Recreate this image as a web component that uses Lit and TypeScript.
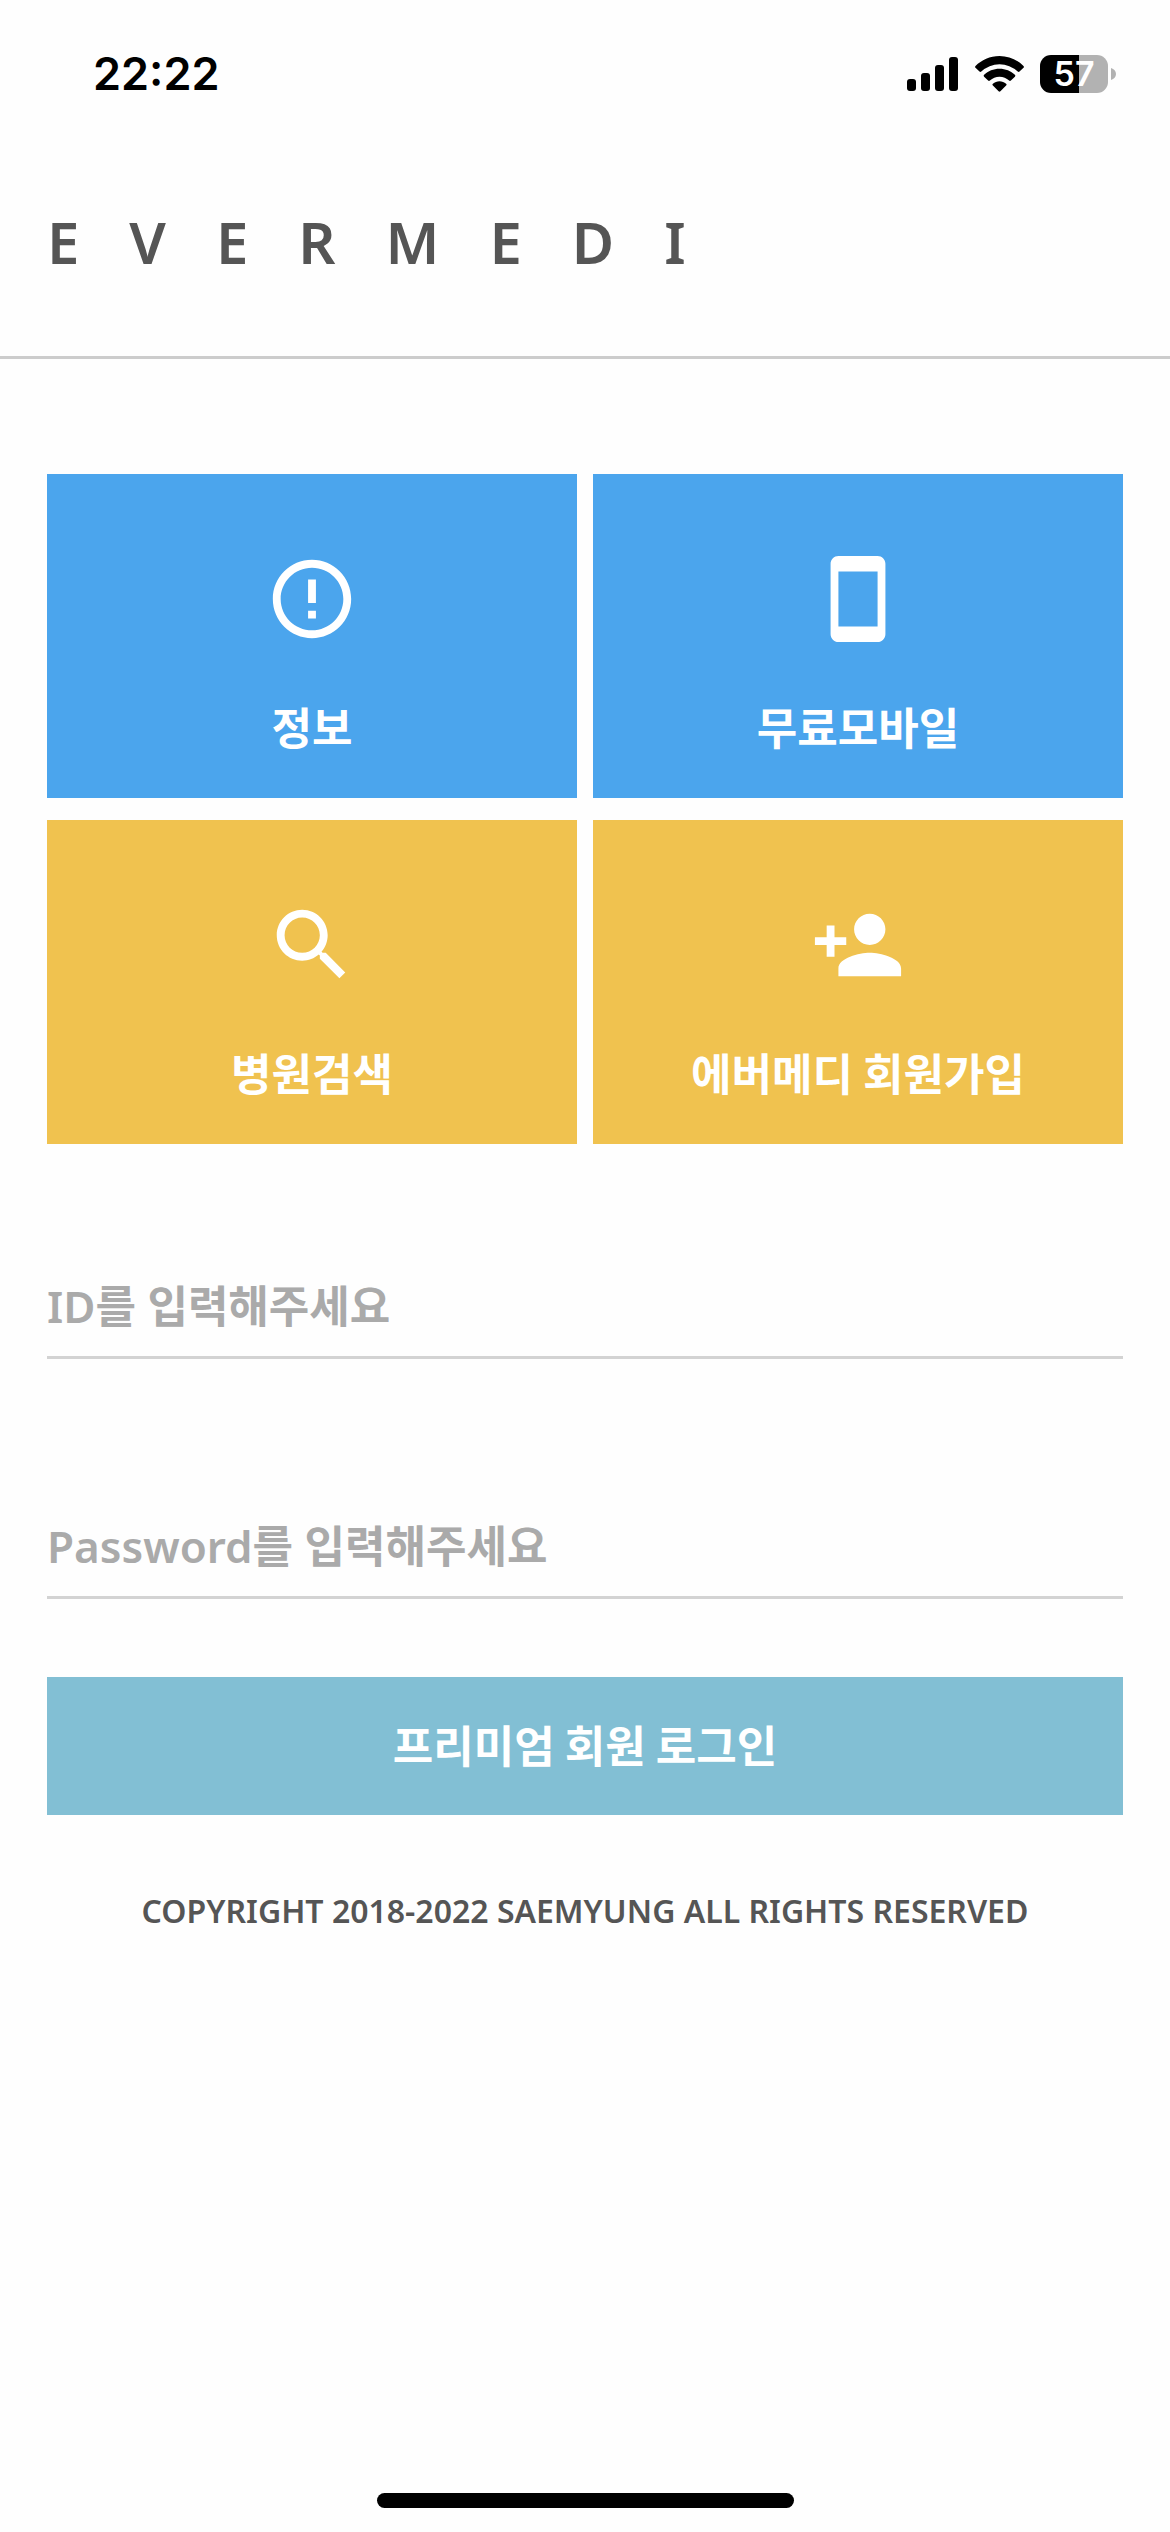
import { LitElement, html, css, svg } from "lit";
import { customElement, property } from "lit/decorators.js";

const icons: Record<string, ReturnType<typeof svg>> = {
  info: svg`<path d="M11 15h2v2h-2zm0-8h2v6h-2zm.99-5C6.47 2 2 6.48 2 12s4.47 10 9.99 10C17.52 22 22 17.52 22 12S17.52 2 11.99 2zM12 20c-4.42 0-8-3.58-8-8s3.58-8 8-8 8 3.58 8 8-3.58 8-8 8z"/>`,
  phone: svg`<path d="M17 1H7c-1.1 0-2 .9-2 2v18c0 1.1.9 2 2 2h10c1.1 0 2-.9 2-2V3c0-1.1-.9-2-2-2zm0 18H7V5h10v14z"/>`,
  search: svg`<path d="M15.5 14h-.79l-.28-.27C15.41 12.59 16 11.11 16 9.5 16 5.91 13.09 3 9.5 3S3 5.91 3 9.5 5.91 16 9.5 16c1.61 0 3.09-.59 4.23-1.57l.27.28v.79l5 4.99L20.49 19l-4.99-5zm-6 0C7.01 14 5 11.99 5 9.5S7.01 5 9.5 5 14 7.01 14 9.5 11.99 14 9.5 14z"/>`,
  join: svg`<path d="M15 12c2.21 0 4-1.79 4-4s-1.79-4-4-4-4 1.79-4 4 1.79 4 4 4zm-9-2V7H4v3H1v2h3v3h2v-3h3v-2H6zm9 4c-2.67 0-8 1.34-8 4v2h16v-2c0-2.66-5.33-4-8-4z"/>`,
};

const tiles = [
  { id: "info", label: "정보", tone: "blue" },
  { id: "phone", label: "무료모바일", tone: "blue" },
  { id: "search", label: "병원검색", tone: "yellow" },
  { id: "join", label: "에버메디 회원가입", tone: "yellow" },
];

@customElement("status-bar")
class StatusBar extends LitElement {
  @property() time = "";
  @property({ type: Number }) level = 0;

  static styles = css`
    :host {
      display: flex;
      justify-content: space-between;
      align-items: center;
      height: 148px;
      padding: 0 54px 0 93px;
      box-sizing: border-box;
      color: #000;
      font-family: Inter, "Liberation Sans", sans-serif;
      font-weight: 600;
    }
    .time {
      font-size: 45px;
      line-height: 56px;
    }
    .right {
      display: flex;
      align-items: center;
    }
    .signal {
      margin-right: 17px;
    }
    .wifi {
      margin-right: 16px;
    }
    .battery {
      width: 68px;
      height: 38px;
      border-radius: 11px;
      color: #fff;
      font-size: 34px;
      line-height: 38px;
      text-align: center;
    }
    .nub {
      margin-left: 3px;
    }
    svg {
      display: block;
    }
  `;

  render() {
    const fill = `background: linear-gradient(to right, #000 ${this.level}%, #b2b2b2 ${this.level}%)`;
    return html`
      <span class="time">${this.time}</span>
      <div class="right">
        <svg class="signal" width="51" height="34" viewBox="0 0 51 34" aria-hidden="true">
          <rect x="0" y="22" width="9" height="12" rx="3" />
          <rect x="14" y="16" width="9" height="18" rx="3" />
          <rect x="28" y="8" width="9" height="26" rx="3" />
          <rect x="42" y="0" width="9" height="34" rx="3" />
        </svg>
        <svg class="wifi" width="49" height="36" viewBox="0 0 49 36" aria-hidden="true">
          <path d="M24.5 0C34 0 42.5 4 48.500 10a1.300 1.300 0 0 1 0 1.800L44.500 15.600a1.300 1.300 0 0 1-1.800 0A26.500 26.500 0 0 0 6.300 15.600a1.300 1.300 0 0 1-1.800 0L.5 11.800A1.300 1.300 0 0 1 .5 10C6.500 4 15 0 24.500 0z" />
          <path d="M24.5 12.800c6 0 11.400 2.300 15.400 6a1.300 1.300 0 0 1 0 1.900l-4 3.900a1.300 1.300 0 0 1-1.800 0 14 14 0 0 0-19.200 0 1.300 1.300 0 0 1-1.800 0l-4-3.900a1.300 1.300 0 0 1 0-1.900c4-3.700 9.400-6 15.400-6z" />
          <path d="M24.5 25.300c2.500 0 4.800 .9 6.600 2.400a1.200 1.200 0 0 1 0 1.800l-5.700 5.700a1.300 1.300 0 0 1-1.800 0l-5.700-5.700a1.200 1.200 0 0 1 0-1.800c1.800-1.500 4.100-2.400 6.600-2.400z" />
        </svg>
        <div class="battery" style=${fill}>${this.level}</div>
        <svg class="nub" width="5" height="12" viewBox="0 0 5 12" aria-hidden="true">
          <path d="M0 0C3 1 5 3 5 6S3 11 0 12z" fill="#b2b2b2" />
        </svg>
      </div>
    `;
  }
}

@customElement("app-root")
class AppRoot extends LitElement {
  static styles = css`
    :host {
      display: flex;
      flex-direction: column;
      min-height: 100vh;
      background: #fefefe;
      color: #555;
      font-family: "Noto Sans", "Noto Sans CJK KR", sans-serif;
      font-weight: 600;
    }
    .header {
      padding: 54px 47px 74px;
      border-bottom: 3px solid #ccc;
    }
    .logo {
      margin: 0;
      font-size: 58px;
      line-height: 80px;
      font-weight: 600;
      letter-spacing: 50px;
      white-space: nowrap;
    }
    .main {
      display: flex;
      flex-direction: column;
      padding: 115px 47px 0;
    }
    .tiles {
      display: grid;
      grid-template-columns: 1fr 1fr;
      gap: 22px 16px;
    }
    .tile {
      display: flex;
      flex-direction: column;
      align-items: center;
      gap: 48px;
      height: 324px;
      padding-top: 78px;
      box-sizing: border-box;
      color: #fff;
      font-family: "Noto Sans CJK KR", sans-serif;
      font-size: 44px;
      line-height: 64px;
      font-weight: 700;
      text-decoration: none;
    }
    .tile svg {
      display: block;
      width: 94px;
      height: 94px;
      fill: currentColor;
    }
    .blue {
      background: #4ba5ed;
    }
    .yellow {
      background: #f0c24f;
    }
    .form {
      display: flex;
      flex-direction: column;
      padding-top: 112px;
    }
    .field {
      width: 100%;
      height: 103px;
      margin: 0 0 137px;
      padding: 0;
      box-sizing: border-box;
      border: 0;
      border-bottom: 3px solid #d3d3d3;
      border-radius: 0;
      outline: 0;
      background: transparent;
      color: #555;
      font: inherit;
      font-size: 44px;
    }
    .field.last {
      margin-bottom: 78px;
    }
    .field::placeholder {
      color: #aaa;
      opacity: 1;
    }
    .login {
      height: 138px;
      padding: 0 0 4px;
      border: 0;
      background: #82bfd4;
      color: #fff;
      font-family: "Noto Sans CJK KR", sans-serif;
      font-size: 44px;
      line-height: 64px;
      font-weight: 700;
    }
    .copyright {
      margin: 72px 0 0;
      font-size: 32px;
      line-height: 48px;
      text-align: center;
    }
    .home {
      width: 417px;
      height: 15px;
      margin: auto auto 24px;
      border-radius: 8px;
      background: #000;
    }
  `;

  render() {
    return html`
      <status-bar time="22:22" level="57"></status-bar>
      <header class="header"><h1 class="logo">EVERMEDI</h1></header>
      <main class="main">
        <nav class="tiles">
          ${tiles.map(
            (t) => html`
              <a class="tile ${t.tone}" href="#${t.id}">
                <svg viewBox="0 0 24 24" aria-hidden="true">${icons[t.id]}</svg>
                <span>${t.label}</span>
              </a>
            `
          )}
        </nav>
        <form class="form" @submit=${(e: Event) => e.preventDefault()}>
          <input class="field" type="text" aria-label="ID" placeholder="ID를 입력해주세요" />
          <input class="field last" type="password" aria-label="Password" placeholder="Password를 입력해주세요" />
          <button class="login" type="submit">프리미엄 회원 로그인</button>
        </form>
        <p class="copyright">COPYRIGHT 2018-2022 SAEMYUNG ALL RIGHTS RESERVED</p>
      </main>
      <div class="home"></div>
    `;
  }
}
